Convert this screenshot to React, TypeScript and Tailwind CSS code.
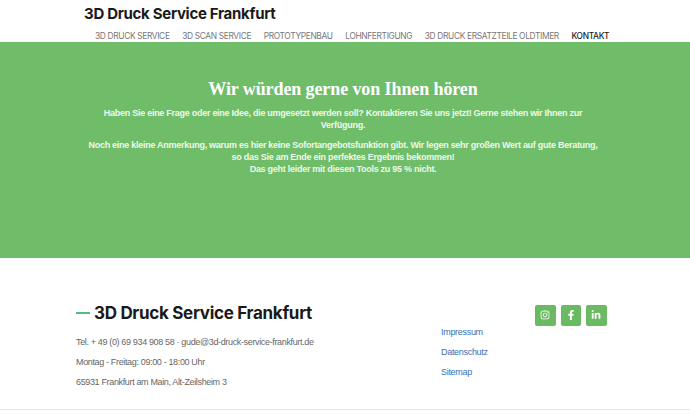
import { FaInstagram, FaFacebookF, FaLinkedinIn } from "react-icons/fa";

const nav = ["3D DRUCK SERVICE", "3D SCAN SERVICE", "PROTOTYPENBAU", "LOHNFERTIGUNG", "3D DRUCK ERSATZTEILE OLDTIMER"];
const poppins = "font-['Inter','Liberation_Sans',sans-serif]";
const helv = "font-['Liberation_Sans',Arial,sans-serif]";

export default function App() {
  return (
    <div className={`w-[690px] h-[415px] overflow-hidden bg-white ${helv}`}>
      <header className={`h-[42px] pl-[84px] ${poppins}`}>
        <div className="h-[30px] pt-[5px] text-[15px] leading-[18px] font-bold tracking-[-0.3px] text-[#1a1a1a]">3D Druck Service Frankfurt</div>
        <nav className="flex gap-[12.6px] pl-[11px] text-[8.4px] leading-[12px] tracking-[-0.35px] text-[#777]">
          {nav.map((n) => <span key={n}>{n}</span>)}
          <span className="font-medium text-[#222]">KONTAKT</span>
        </nav>
      </header>
      <section className="h-[216px] bg-[#6fbd68] pt-[37px] pr-[4px] text-center text-white">
        <h1 className="font-['Liberation_Serif',serif] text-[18px] leading-[20px] font-bold tracking-[-0.1px]">Wir würden gerne von Ihnen hören</h1>
        <div className="mx-auto mt-[8px] w-[520px] text-[9px] leading-[12px] font-bold tracking-[-0.27px] text-[#eef8ec]">
          <p>Haben Sie eine Frage oder eine Idee, die umgesetzt werden soll? Kontaktieren Sie uns jetzt! Gerne stehen wir Ihnen zur Verfügung.</p>
          <p className="mt-[8px]">
            Noch eine kleine Anmerkung, warum es hier keine Sofortangebotsfunktion gibt. Wir legen sehr großen Wert auf gute Beratung,<br />
            so das Sie am Ende ein perfektes Ergebnis bekommen!<br />
            Das geht leider mit diesen Tools zu 95 % nicht.
          </p>
        </div>
      </section>
      <footer className="flex h-[152px] border-b border-[#e5e5e5]">
        <div className="w-[365px] pl-[76px] pt-[44px]">
          <div className="flex items-center gap-[4px]">
            <span className="h-[2px] w-[14px] bg-[#4fbf7f]" />
            <span className={`${poppins} text-[17px] leading-[22px] font-bold tracking-[-0.3px] text-[#1a1a1a]`}>3D Druck Service Frankfurt</span>
          </div>
          <div className="mt-[12px] flex flex-col gap-[8px] text-[9px] leading-[12px] tracking-[-0.35px] text-[#666]">
            <p>Tel. + 49 (0) 69 934 908 58 · gude@3d-druck-service-frankfurt.de</p>
            <p>Montag - Freitag: 09:00 - 18:00 Uhr</p>
            <p>65931 Frankfurt am Main, Alt-Zeilsheim 3</p>
          </div>
        </div>
        <div className="flex flex-1 pl-[76px]">
          <div className="flex w-[94px] flex-col gap-[8px] pt-[68px] text-[9px] leading-[12px] tracking-[-0.3px] text-[#3a6fb5]">
            <span>Impressum</span>
            <span>Datenschutz</span>
            <span>Sitemap</span>
          </div>
          <div className="flex gap-[5px] pt-[47px]">
            {[<FaInstagram key="i" />, <FaFacebookF key="f" />, <FaLinkedinIn key="l" />].map((icon, i) => (
              <span key={i} className="flex h-[20.5px] w-[20.5px] items-center justify-center rounded-[2px] bg-[#6aba63] text-[10px] text-white">{icon}</span>
            ))}
          </div>
        </div>
      </footer>
    </div>
  );
}
